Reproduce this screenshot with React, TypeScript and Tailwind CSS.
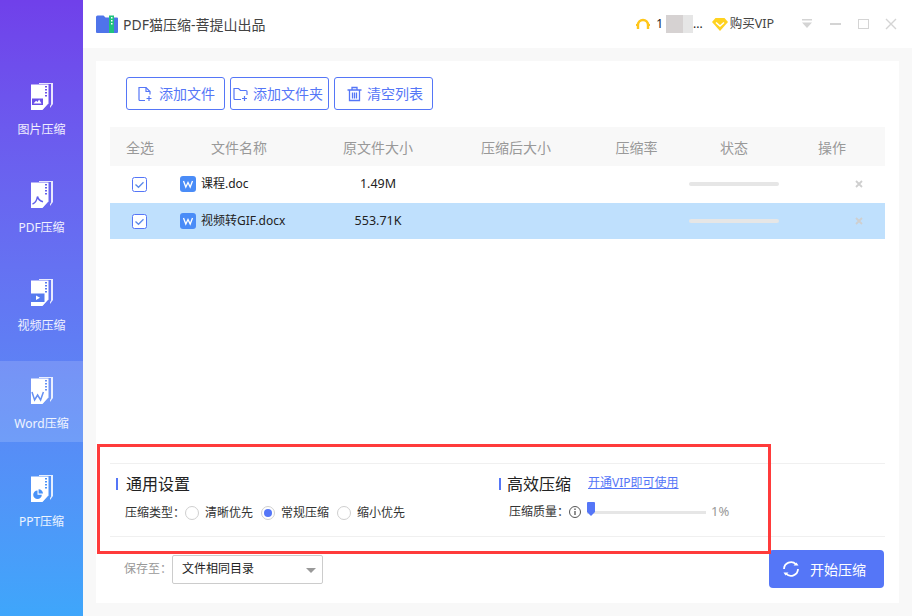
import type { ReactNode } from "react";

const Glyph = ({ kind }: { kind: string }) => {
  if (kind === "image") {
    return <path d="M2 22h11v-6.500H2zM3.500 20.500l2.600-2.800 1.400 1.300 1.600-2.500 2.400 4z" fillRule="evenodd" fill="#6a50e8" />;
  }
  if (kind === "pdf") {
    return (
      <path
        d="M2.500 23c3-1 4.400-3.800 5-7.500.7 2.800 2.400 4.500 5.500 5.200"
        fill="none"
        stroke="#6060ea"
        strokeWidth="1.500"
      />
    );
  }
  if (kind === "video") {
    return <path d="M1 14.500h13.500v8.500H1zM6 16.500v4.500l4-2.250z" fillRule="evenodd" fill="#567aef" />;
  }
  if (kind === "word") {
    return (
      <path d="M2 15l2.600 8 3-5 3 5 2.800-8" fill="none" stroke="#6690f2" strokeWidth="1.500" />
    );
  }
  return (
    <>
      <path d="M7.500 15.500a4.300 4.300 0 1 0 4.300 4.300H7.500z" fill="#4892f8" />
      <path d="M8.600 14.200v4.400H13a4.400 4.400 0 0 0-4.400-4.400z" fill="#4892f8" />
    </>
  );
};

const NavIcon = ({ kind, color }: { kind: string; color: string }) => (
  <svg width="24" height="28" viewBox="0 0 24 28">
    <path d="M21 1h2v20l-3 4v-2l1-1.500z M9 0h14v1H9z" fill="#ffffff" opacity="0.85" />
    <path d="M1 1.500h17.500V20l-6 7H1z" fill="#ffffff" />
    <path d="M13 26l1-6h5z" fill="#ffffff" opacity="0.7" />
    <path d="M15 3h2v1.500h-2zM15 6h2v1.500h-2zM15 9h2v1.500h-2zM15 12h2v1.500h-2z" fill={color} />
    <Glyph kind={kind} />
  </svg>
);

const navItems = [
  { label: "图片压缩", kind: "image", color: "#6a50e8" },
  { label: "PDF压缩", kind: "pdf", color: "#6060ea" },
  { label: "视频压缩", kind: "video", color: "#567aef" },
  { label: "Word压缩", kind: "word", color: "#6690f2", active: true },
  { label: "PPT压缩", kind: "ppt", color: "#4892f8" },
];

const ToolButton = ({ icon, label, inset }: { icon: ReactNode; label: string; inset: string }) => (
  <button className={`w-[99px] h-[33px] flex items-center border border-[#5576f7] rounded-[3px] bg-white text-[14px] text-[#5576f7] ${inset}`}>
    {icon}
    <span className="whitespace-nowrap">{label}</span>
  </button>
);

const FileWord = () => (
  <svg width="16" height="16" viewBox="0 0 16 16" className="shrink-0">
    <rect width="16" height="16" rx="3" fill="#4a8cf7" />
    <path d="M3.500 5l2.300 6 2.200-4.500 2.200 4.500 2.300-6" fill="none" stroke="#ffffff" strokeWidth="1.300" />
  </svg>
);

const Check = () => (
  <svg width="15" height="15" viewBox="0 0 15 15" className="shrink-0">
    <rect x="0.500" y="0.500" width="14" height="14" rx="2" fill="#ffffff" stroke="#5576f7" />
    <path d="M3.500 7.500l3 2.800 5-5" fill="none" stroke="#5b8ae8" strokeWidth="1.300" />
  </svg>
);

const FileRow = ({ name, size, selected }: { name: string; size: string; selected?: boolean }) => (
  <div
    className={`grid grid-cols-[60px_138px_140px_136px_105px_90px_106px] h-[36px] items-center text-[12px] text-[#222222] ${
      selected ? "bg-[#bfe0fd]" : "bg-white"
    }`}
  >
    <div className="flex justify-center pr-[2px]">
      <Check />
    </div>
    <div className="flex items-center gap-[5px] pl-[10px] whitespace-nowrap">
      <FileWord />
      <span>{name}</span>
    </div>
    <div className="text-center text-[12.5px]">{size}</div>
    <div />
    <div />
    <div className="h-[4px] rounded-full bg-[#e6e6e6]" />
    <div className="flex justify-end pr-[22px]">
      <svg width="8" height="8" viewBox="0 0 8 8">
        <path d="M1 1l6 6M7 1l-6 6" stroke="#cfcfcf" strokeWidth="1.800" />
      </svg>
    </div>
  </div>
);

const Radio = ({ label, on }: { label: string; on?: boolean }) => (
  <div className="flex items-center gap-[6px] w-[76px]">
    <span className="w-[14px] h-[14px] rounded-full border border-[#cfcfcf] bg-white flex items-center justify-center shrink-0">
      {on && <span className="w-[8px] h-[8px] rounded-full bg-[#5576f7]" />}
    </span>
    <span className="text-[12px] text-[#333333] whitespace-nowrap">{label}</span>
  </div>
);

const SectionTitle = ({ label, gap }: { label: string; gap: string }) => (
  <div className={`flex items-center ${gap}`}>
    <span className="w-[2px] h-[12px] bg-[#5576f7]" />
    <span className="text-[16px] text-[#222222] leading-[22px] whitespace-nowrap">{label}</span>
  </div>
);

export default function App() {
  return (
    <div className="relative w-[912px] h-[616px] flex overflow-hidden bg-[#f8f8f8] font-['Noto_Sans','Noto_Sans_CJK_SC',sans-serif]">
      {/* Sidebar */}
      <aside className="w-[83px] shrink-0 flex flex-col gap-[17px] pt-[67px] bg-gradient-to-b from-[#7040ea] to-[#3ea6fb]">
        {navItems.map((item) => (
          <div
            key={item.label}
            className={`h-[81px] flex flex-col items-center pt-[16px] ${item.active ? "bg-white/15" : ""}`}
          >
            <NavIcon kind={item.kind} color={item.color} />
            <span className="mt-[10px] text-[12px] leading-[18px] text-white/90 whitespace-nowrap">{item.label}</span>
          </div>
        ))}
      </aside>

      <div className="flex-1 flex flex-col min-w-0">
        {/* Title bar */}
        <header className="h-[48px] shrink-0 bg-white flex items-center pl-[13px] pr-[15px]">
          <svg width="22" height="20" viewBox="0 0 22 20" className="shrink-0">
            <path d="M0 3a1.500 1.500 0 0 1 1.500-1.500h6l2 2H21a1 1 0 0 1 1 1V18a1 1 0 0 1-1 1H1a1 1 0 0 1-1-1z" fill="#4f74ea" />
            <rect x="13" y="1.500" width="5" height="17.500" fill="#1fc27e" />
            <path d="M15 3h1.500v1.500H15zM15 6h1.500v1.500H15zM15 9h1.500v1.500H15z" fill="#ffffff" />
          </svg>
          <span className="ml-[5px] text-[14px] text-[#444444] whitespace-nowrap">PDF猫压缩-菩提山出品</span>
          <div className="flex-1" />
          <svg width="14" height="12" viewBox="0 0 14 12" className="shrink-0">
            <path d="M2 11V7a5 5 0 0 1 10 0v4" fill="none" stroke="#ffc61a" strokeWidth="2.400" />
            <path d="M0 7h2.500M11.500 7H14" stroke="#ffc61a" strokeWidth="2" />
          </svg>
          <span className="ml-[6px] text-[12px] text-[#222222]">1</span>
          <span className="ml-[3px] w-[17px] h-[18px] bg-[#d6d2d2]" />
          <span className="w-[10px] h-[18px] bg-[#e6e6e6]" />
          <span className="text-[12px] text-[#222222]">...</span>
          <svg width="16" height="13" viewBox="0 0 16 13" className="ml-[9px] shrink-0">
            <path d="M3.500 0h9L16 4l-8 9-8-9z" fill="#ffd21f" />
            <path d="M4 4.500l4 3.500 4-3.500" fill="none" stroke="#ffffff" strokeWidth="1.500" />
          </svg>
          <span className="ml-[2px] text-[12.5px] text-[#444444] whitespace-nowrap">购买VIP</span>
          <svg width="12" height="12" viewBox="0 0 12 12" className="ml-[27px] shrink-0">
            <path d="M1 1h10v1.500H1zM1 4.500h10L6 10z" fill="#d4d4d4" />
          </svg>
          <span className="ml-[17px] w-[11px] h-[2px] bg-[#d4d4d4]" />
          <span className="ml-[17px] w-[11px] h-[10px] border border-[#d4d4d4]" />
          <svg width="12" height="12" viewBox="0 0 12 12" className="ml-[16px] shrink-0">
            <path d="M1 1l10 10M11 1L1 11" stroke="#d4d4d4" strokeWidth="1.400" />
          </svg>
        </header>

        {/* Card */}
        <main className="ml-[13px] mt-[13px] w-[803px] h-[542px] bg-white px-[14px] flex flex-col">
          <div className="flex gap-[5px] pl-[16px] pt-[16px]">
            <ToolButton
              label="添加文件"
              inset="pl-[11px] gap-[6px]"
              icon={
                <svg width="15" height="16" viewBox="0 0 15 16" fill="none" stroke="#5576f7" strokeWidth="1.200">
                  <path d="M7 14.500H2a1 1 0 0 1-1-1v-12h7l4 4v3" />
                  <path d="M8 1.500v4h4M11 10v5M8.500 12.500h5" />
                </svg>
              }
            />
            <ToolButton
              label="添加文件夹"
              inset="pl-[2px] gap-[5px]"
              icon={
                <svg width="15" height="16" viewBox="0 0 15 16" fill="none" stroke="#5576f7" strokeWidth="1.200">
                  <path d="M8 13.500H2a1 1 0 0 1-1-1v-10h4.500l2 2H13a1 1 0 0 1 1 1V9" />
                  <path d="M11.500 10v5M9 12.500h5" />
                </svg>
              }
            />
            <ToolButton
              label="清空列表"
              inset="pl-[12px] gap-[5px]"
              icon={
                <svg width="15" height="16" viewBox="0 0 15 16" fill="none" stroke="#5576f7" strokeWidth="1.300">
                  <path d="M0.500 4h14M5 4V1.500h5V4M2.500 4v10.500h10V4M5.500 6.500v6M7.500 6.500v6M9.500 6.500v6" />
                </svg>
              }
            />
          </div>

          {/* File table */}
          <div className="mt-[17px] pt-[2px] grid grid-cols-[60px_138px_140px_136px_105px_90px_106px] h-[39px] items-center bg-[#f8f8f8] text-[14px] text-[#999999] text-center whitespace-nowrap">
            <div>全选</div>
            <div>文件名称</div>
            <div>原文件大小</div>
            <div>压缩后大小</div>
            <div>压缩率</div>
            <div>状态</div>
            <div>操作</div>
          </div>
          <div className="flex flex-col gap-[1px]">
            <FileRow name="课程.doc" size="1.49M" />
            <FileRow name="视频转GIF.docx" size="553.71K" selected />
          </div>

          {/* Settings */}
          <div className="mt-auto h-[74px] border-y border-[#f0f0f0] flex pl-[6px] pt-[9px]">
            <div className="w-[383px] shrink-0 flex flex-col">
              <SectionTitle label="通用设置" gap="gap-[8px]" />
              <div className="mt-[9px] pl-[9px] flex items-center h-[18px]">
                <span className="w-[60px] text-[12px] text-[#333333] whitespace-nowrap">压缩类型：</span>
                <Radio label="清晰优先" />
                <Radio label="常规压缩" on />
                <Radio label="缩小优先" />
              </div>
            </div>
            <div className="flex flex-col">
              <div className="flex items-center">
                <SectionTitle label="高效压缩" gap="gap-[6px]" />
                <span className="ml-[17px] mb-[2px] text-[12px] text-[#5576f7] underline whitespace-nowrap">开通VIP即可使用</span>
              </div>
              <div className="mt-[8px] pl-[10px] flex items-center h-[18px]">
                <span className="w-[60px] text-[12px] text-[#333333] whitespace-nowrap">压缩质量：</span>
                <svg width="12" height="12" viewBox="0 0 12 12" className="shrink-0">
                  <circle cx="6" cy="6" r="5.500" fill="none" stroke="#555555" />
                  <path d="M6 2.500v1.500M6 5v4" stroke="#555555" strokeWidth="1.300" />
                </svg>
                <div className="ml-[6px] w-[119px] h-[3px] bg-[#e6e6e6] relative">
                  <svg width="8" height="14" viewBox="0 0 8 14" className="absolute left-0 top-[-9px]">
                    <path d="M1 0h6a1 1 0 0 1 1 1v9l-4 4-4-4V1a1 1 0 0 1 1-1z" fill="#5576f7" />
                  </svg>
                </div>
                <span className="ml-[5px] text-[13px] text-[#999999]">1%</span>
              </div>
            </div>
          </div>

          <div className="mt-[13px] mb-[15px] flex items-center pl-[14px] pr-[1px]">
            <span className="w-[48px] text-[12px] text-[#999999] whitespace-nowrap">保存至：</span>
            <div className="w-[151px] h-[29px] border border-[#cccccc] rounded-[2px] flex items-center justify-between pl-[9px] pr-[6px]">
              <span className="text-[12px] text-[#222222]">文件相同目录</span>
              <span className="mt-[2px] border-x-[5px] border-x-transparent border-t-[5px] border-t-[#999999]" />
            </div>
            <button className="ml-auto w-[115px] h-[38px] rounded-[4px] bg-[#5576f7] text-white text-[14px] flex items-center pl-[13px] gap-[10px]">
              <svg width="18" height="18" viewBox="0 0 18 18" fill="none" stroke="#ffffff" strokeWidth="1.800">
                <path d="M2 9a7 7 0 0 1 12-4.700M16 9a7 7 0 0 1-12 4.700" />
                <path d="M16.500 5.500h-5l3-3zM1.500 12.500h5l-3 3z" fill="#ffffff" stroke="none" />
              </svg>
              开始压缩
            </button>
          </div>
        </main>
      </div>

      {/* Red annotation frame */}
      <div className="absolute left-[97px] top-[444px] w-[674px] h-[110px] border-[3px] border-[#ff3b3b]" />
    </div>
  );
}
